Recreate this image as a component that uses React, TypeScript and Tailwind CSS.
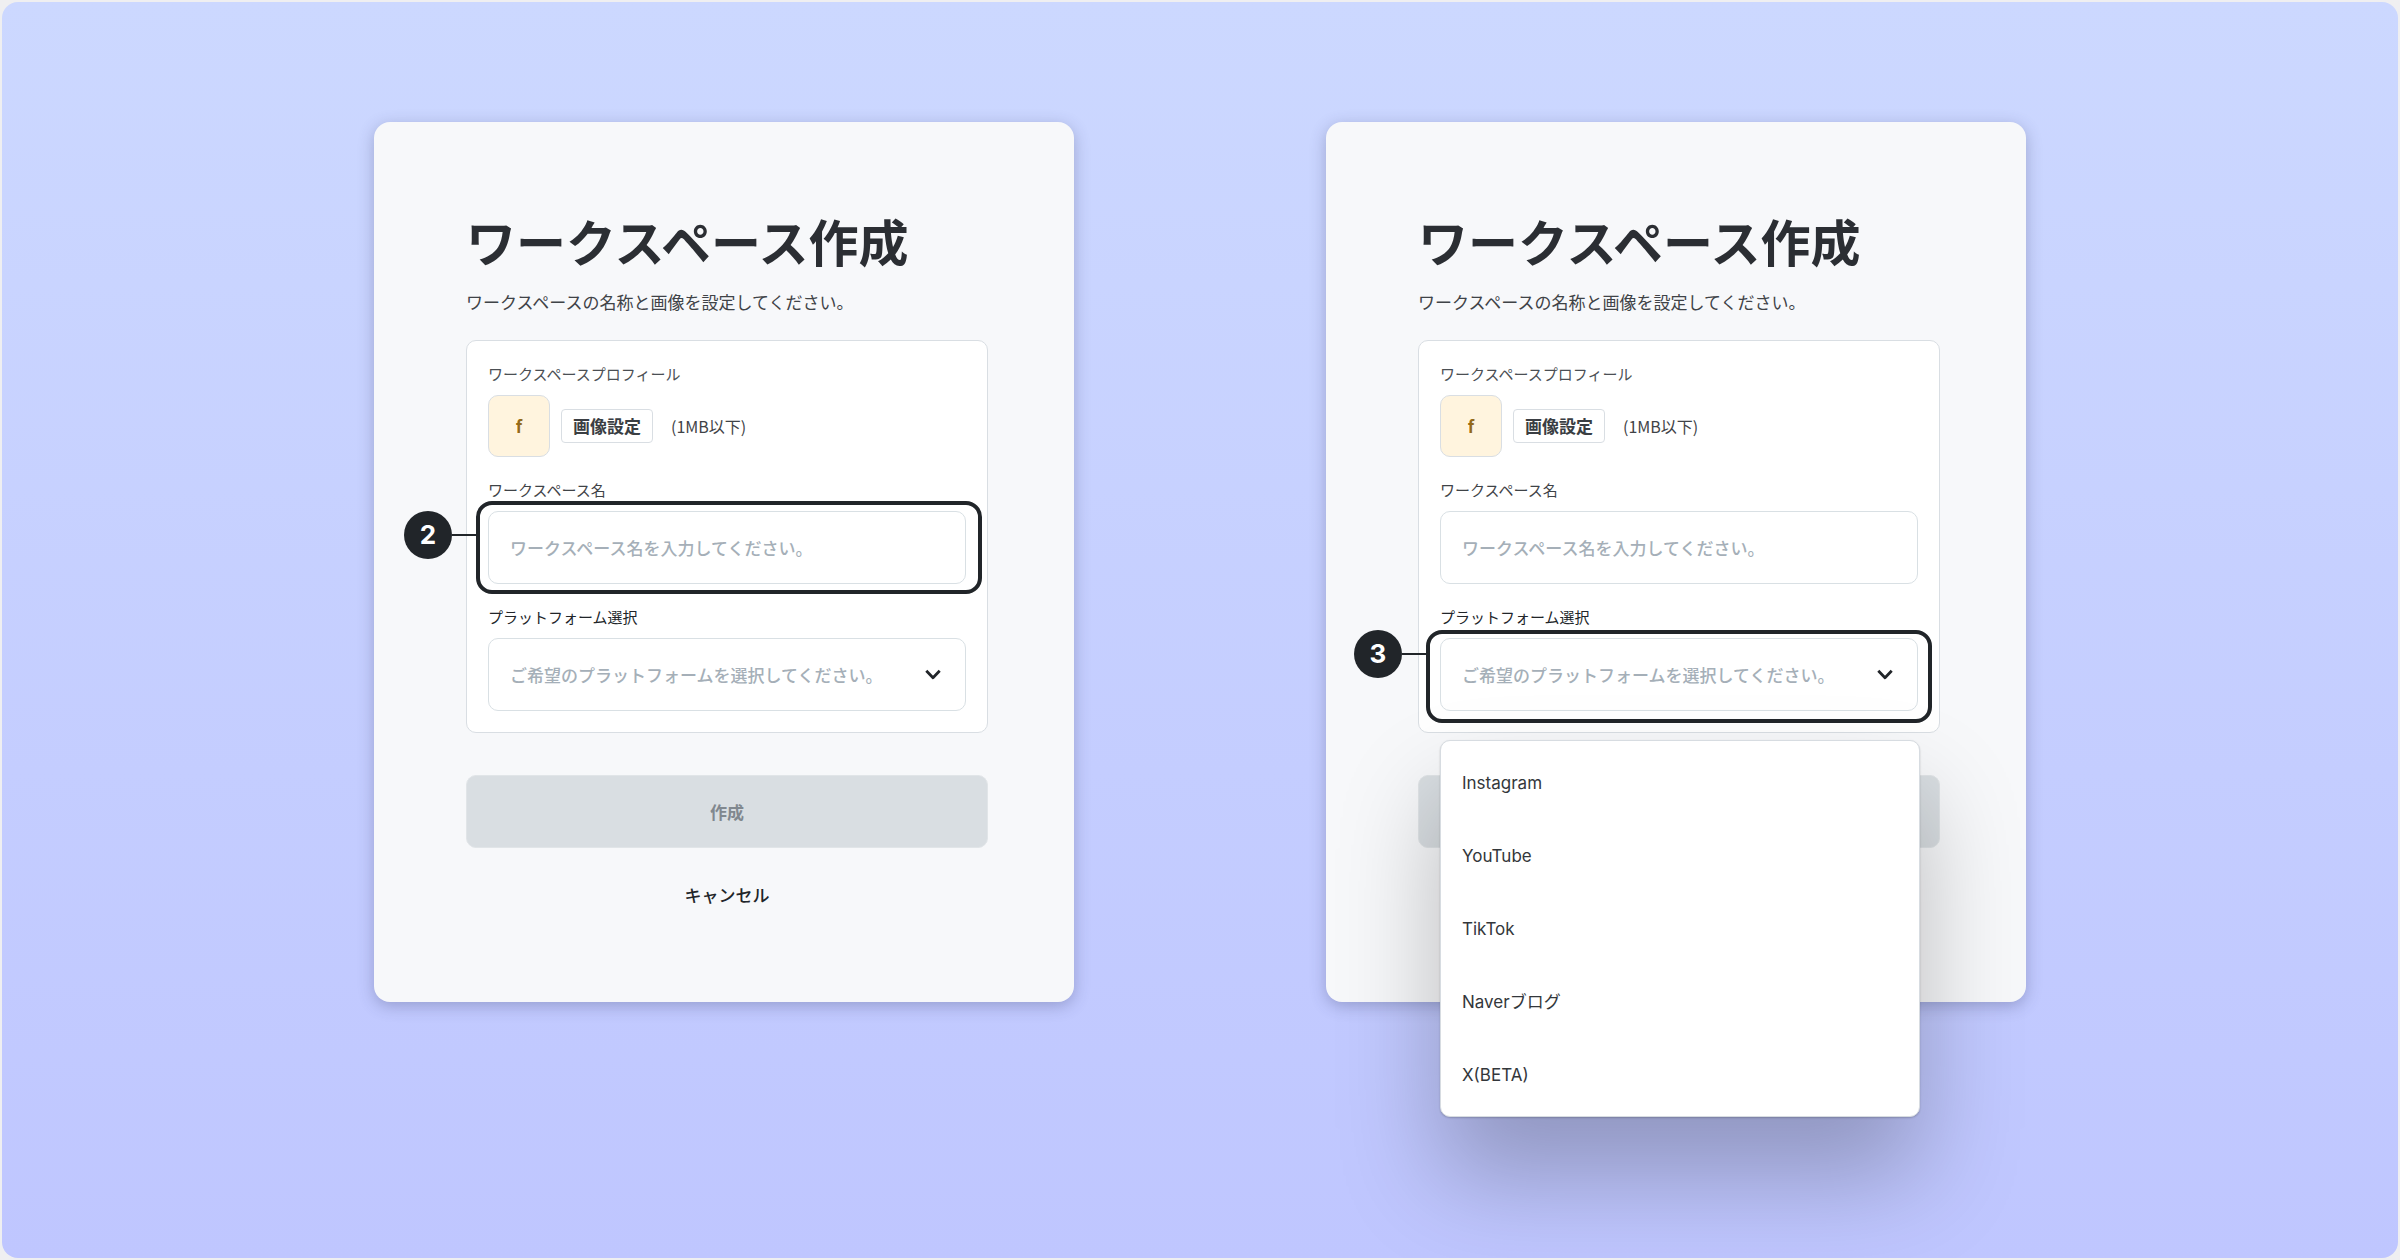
import { useId, useState } from 'react';
import clsx from 'clsx';

const PLATFORMS = ['Instagram', 'YouTube', 'TikTok', 'Naverブログ', 'X(BETA)'];

interface CalloutProps {
  step: number;
  ringClass: string;
  badgeClass: string;
}

// Step marker: outline around a field with a numbered badge on its left
function Callout({ step, ringClass, badgeClass }: CalloutProps) {
  return (
    <div className={clsx('pointer-events-none absolute rounded-2xl border-4 border-[#212529]', ringClass)}>
      <div className={clsx('absolute right-full flex items-center', badgeClass)}>
        <span className="flex size-12 items-center justify-center rounded-full bg-[#212529] font-['Inter','Liberation_Sans',sans-serif] text-[26px] leading-8 font-bold text-white">
          {step}
        </span>
        <span className="h-0.5 w-7 bg-[#212529]" />
      </div>
    </div>
  );
}

interface CardProps {
  activeStep: 2 | 3;
  menuOpen?: boolean;
}

function WorkspaceCard({ activeStep, menuOpen = false }: CardProps) {
  const id = useId();
  const [name, setName] = useState('');
  const [platform, setPlatform] = useState('');
  const [open, setOpen] = useState(menuOpen);

  return (
    <section className="w-full max-w-[700px] rounded-2xl bg-[#f7f8fa] pt-[86px] pr-[86px] pb-[83px] pl-[92px] shadow-[0_4px_16px_rgba(60,64,110,0.32)]">
      <h1 className="text-[50px] leading-[64px] font-bold whitespace-nowrap text-[#2b2e33]">ワークスペース作成</h1>
      <p className="mt-[18px] text-[17px] leading-6 text-[#3f4347]">ワークスペースの名称と画像を設定してください。</p>

      <form onSubmit={(e) => e.preventDefault()}>
        <div className="mt-[26px] rounded-[10px] border border-[#d9dee3] bg-white p-[21px]">
          <p className="text-[15px] leading-6 text-[#4b4f54]">ワークスペースプロフィール</p>
          <div className="mt-[9px] flex items-center">
            <div className="flex size-[62px] items-center justify-center rounded-[10px] border border-[#d9dee3] bg-[#fff4de] text-[17px] font-bold text-[#946a1a]">
              f
            </div>
            <button
              type="button"
              className="ml-[11px] h-[34px] rounded-[4px] border border-[#d9dee3] bg-white px-[11px] text-[17px] leading-6 font-bold text-[#3a3e43]"
            >
              画像設定
            </button>
            <span className="ml-[18px] text-[16px] leading-6 text-[#3f4347]">(1MB以下)</span>
          </div>

          <label htmlFor={`${id}-name`} className="mt-[21px] block text-[15px] leading-6 text-[#3f4347]">
            ワークスペース名
          </label>
          <div className="relative mt-[9px]">
            <input
              id={`${id}-name`}
              type="text"
              value={name}
              onChange={(e) => setName(e.target.value)}
              placeholder="ワークスペース名を入力してください。"
              className="block h-[73px] w-full rounded-[10px] border border-[#d9e0e4] bg-white px-[21px] text-[17px] font-medium text-[#2b2e33] outline-none placeholder:text-[#a5afb8]"
            />
            {activeStep === 2 && <Callout step={2} ringClass="-top-2.5 -right-4 -bottom-2.5 -left-3" badgeClass="top-1.5" />}
          </div>

          <label htmlFor={`${id}-platform`} className="mt-[21px] block text-[15px] leading-6 text-[#212529]">
            プラットフォーム選択
          </label>
          <div className="relative mt-[9px]">
            <select
              id={`${id}-platform`}
              value={platform}
              onChange={(e) => setPlatform(e.target.value)}
              className="block h-[73px] w-full appearance-none rounded-[10px] border border-[#d9e0e4] bg-white px-[21px] text-[17px] font-medium text-[#a5afb8] outline-none"
            >
              <option value="">ご希望のプラットフォームを選択してください。</option>
              {PLATFORMS.map((p) => (
                <option key={p}>{p}</option>
              ))}
            </select>
            <svg
              className="pointer-events-none absolute top-7 right-[25px] size-4"
              viewBox="0 0 16 16"
              fill="none"
              stroke="#212529"
              strokeWidth={2.8}
            >
              <path strokeLinejoin="round" d="M1.3 4.8 8 11.7 14.7 4.8" />
            </svg>
            {activeStep === 3 && <Callout step={3} ringClass="-top-2 -right-3.5 -bottom-3 -left-3.5" badgeClass="-top-1" />}

            {open && (
              <ul
                role="listbox"
                className="absolute top-[102px] -right-0.5 left-0 rounded-[10px] border border-[#d7dce1] bg-white py-[5px] shadow-[0_1px_2px_rgba(0,0,0,0.2),0_60px_100px_rgba(0,0,0,0.25)]"
              >
                {PLATFORMS.map((p) => (
                  <li key={p} role="option" aria-selected={p === platform}>
                    <button
                      type="button"
                      onClick={() => {
                        setPlatform(p);
                        setOpen(false);
                      }}
                      className="h-[73px] w-full px-[21px] text-left font-['Inter','Noto_Sans_CJK_JP',sans-serif] text-[17px] leading-6 text-[#33373b]"
                    >
                      {p}
                    </button>
                  </li>
                ))}
              </ul>
            )}
          </div>
        </div>

        <button
          type="submit"
          disabled
          className="mt-[42px] block h-[73px] w-full rounded-[10px] border border-[#e1e5e8] bg-[#d9dee2] text-[17px] leading-6 font-bold text-[#81888f]"
        >
          作成
        </button>
        <button type="button" className="mt-[23px] block h-12 w-full text-[17px] leading-6 font-medium text-[#212529]">
          キャンセル
        </button>
      </form>
    </section>
  );
}

export default function App() {
  return (
    <div className="flex min-h-screen bg-[#efeff1] p-0.5 font-['Noto_Sans_CJK_JP',sans-serif]">
      <main className="flex flex-1 items-start justify-center gap-[252px] overflow-hidden rounded-2xl bg-linear-to-b from-[#ccd8ff] to-[#bfc6ff] px-8 pt-[120px] pb-16">
        <WorkspaceCard activeStep={2} />
        <WorkspaceCard activeStep={3} menuOpen />
      </main>
    </div>
  );
}
